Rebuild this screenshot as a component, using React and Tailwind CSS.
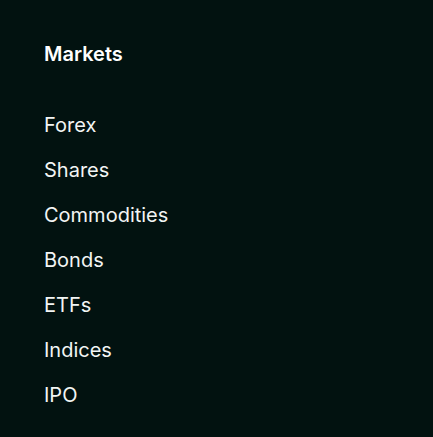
const items = ["Forex", "Shares", "Commodities", "Bonds", "ETFs", "Indices", "IPO"];

export default function App() {
  return (
    <div
      className="h-[437px] w-[433px] bg-[#021210] pl-[44px] pt-[40px] text-white"
      style={{ fontFamily: "Inter, 'Noto Sans', sans-serif" }}
    >
      <h3 className="text-[20px] font-semibold leading-[28px]">Markets</h3>
      <ul className="mt-[35px] flex flex-col">
        {items.map((item) => (
          <li key={item} className="text-[20px] leading-[45px] text-[#f2f5f4]">
            <a href="#">{item}</a>
          </li>
        ))}
      </ul>
    </div>
  );
}
